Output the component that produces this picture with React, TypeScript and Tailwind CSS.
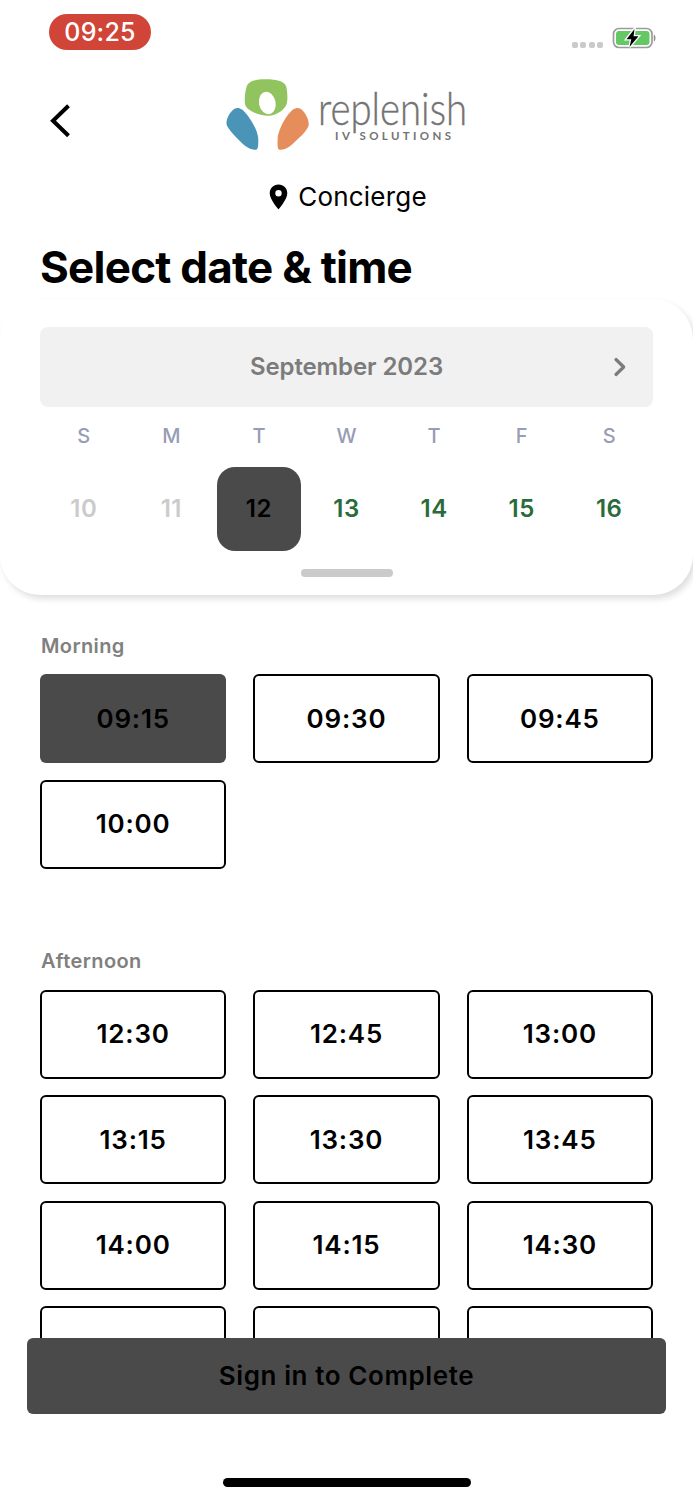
import clsx from 'clsx';

const days = [
  { label: 'S', date: 10, status: 'past' },
  { label: 'M', date: 11, status: 'past' },
  { label: 'T', date: 12, status: 'selected' },
  { label: 'W', date: 13, status: 'open' },
  { label: 'T', date: 14, status: 'open' },
  { label: 'F', date: 15, status: 'open' },
  { label: 'S', date: 16, status: 'open' },
];

const morning = ['09:15', '09:30', '09:45', '10:00'];
const afternoon = [
  '12:30', '12:45', '13:00',
  '13:15', '13:30', '13:45',
  '14:00', '14:15', '14:30',
  '', '', '',
];

function StatusBar() {
  return (
    <div className="flex h-16 shrink-0 items-start justify-between pl-[49px] pr-[35px] pt-[14px]">
      <div className="flex h-[36px] w-[102px] items-center justify-center rounded-full bg-[#d14538] pt-0.5 text-[25px] font-medium tracking-[0.2px] text-white">
        09:25
      </div>
      <div className="flex items-center gap-[9px] pt-3">
        <div className="flex gap-[2.5px] pt-3.5">
          {[0, 1, 2, 3].map((i) => (
            <span key={i} className="h-1.5 w-1.5 rounded-[2px] bg-[#cacaca]" />
          ))}
        </div>
        <svg width="46" height="24" viewBox="0 0 46 24" fill="none">
          <rect x="1.5" y="2.5" width="38.5" height="19" rx="5.5" stroke="#9b9b9b" strokeWidth="1.7" />
          <rect x="4" y="5" width="33.5" height="14" rx="3" fill="#64c864" />
          <path d="M41.8 8.5c2.2.8 2.2 6.2 0 7z" fill="#8c8c8c" />
          <path d="M22.5 3 14.5 13.2h4.8L17.500 21 26.500 10.3h-4.900z" fill="#000" stroke="#fff" strokeWidth="2.6" paintOrder="stroke" />
        </svg>
      </div>
    </div>
  );
}

function Logo() {
  return (
    <svg className="h-[80px] w-[260px] overflow-visible" viewBox="0 0 260 80">
      <path d="M26.5 13C28 8 33 5.3 45 5.2c13 0 19.5 2.4 21.2 7.3 1 3.5 1.8 12.5.6 17C65 36 56 41.5 48.5 41.8 37 41.5 27 36 25.3 31c-1.2-4-.3-13.500 1.2-18z" fill="#91c45f" />
      <ellipse cx="47.3" cy="29" rx="8.3" ry="11.3" transform="rotate(-12 47.3 29)" fill="#fff" />
      <path d="M15 34.5c2.3-1 4.8-.5 7 1C28 40 37.500 55 38.200 64c.3 5 0 10.500-1.500 11.500-1.600 1.100-8-.5-12-4C17.500 65 7 54.500 6.500 50c-.5-6 4.500-13.500 8.500-15.500z" fill="#4a94b8" />
      <path d="M80 34.5c-2.3-1-4.8-.5-7 1C67 40 58.500 55 57.700 64c-.3 5-.3 10.500 1.200 11.500 1.600 1.100 8-.5 12-4C78 65 88 56.500 88.700 51c.7-6-4.700-14.500-8.700-16.500z" fill="#e58e5c" />
      <text x="98" y="50.500" textLength="149" lengthAdjust="spacingAndGlyphs" fill="#737373" stroke="#737373" strokeWidth="0.4" className="font-['Lato',sans-serif] text-[46px] font-light">
        replenish
      </text>
      <g fill="#737373" className="font-['Lato',sans-serif] text-[11.5px] font-bold">
        <text x="115" y="65.700" textLength="15">IV</text>
        <text x="139.500" y="65.700" textLength="91.500">SOLUTIONS</text>
      </g>
    </svg>
  );
}

function Header() {
  return (
    <header className="shrink-0">
      <div className="grid h-[102px] grid-cols-[220px_260px_1fr] items-start pt-[10px]">
        <button aria-label="Back" className="ml-[48px] mt-[29px] w-6">
          <svg width="24" height="36" viewBox="0 0 24 36" fill="none" stroke="#000" strokeWidth="4">
            <path d="M20.500 2.800 5 17.700 20.500 32.700" />
          </svg>
        </button>
        <Logo />
      </div>
      <div className="flex h-[60px] items-center justify-center gap-[10px] pl-[3px]">
        <svg width="19" height="26" viewBox="0 0 19 26" className="mt-0.5">
          <path fillRule="evenodd" d="M9.500.5C4.500.5.700 4.300.700 9.200c0 6.300 8.800 16.100 8.800 16.100s8.800-9.800 8.800-16.100C18.300 4.300 14.500.500 9.500.500zm0 5.600a3.200 3.200 0 1 1 0 6.400 3.200 3.200 0 0 1 0-6.400z" />
        </svg>
        <span className="text-[26px] tracking-[0.2px]">Concierge</span>
      </div>
      <h1 className="pl-10 pt-[15px] text-[44px] font-bold leading-[52px] tracking-[-0.75px]">Select date &amp; time</h1>
    </header>
  );
}

function Calendar() {
  return (
    <section className="mt-[6px] flex h-[296px] shrink-0 flex-col rounded-[40px] bg-white px-10 pt-[28px] shadow-[3px_4px_6px_rgba(0,0,0,0.13)]">
      <div className="flex h-[80px] shrink-0 items-center rounded-lg bg-[#f1f1f1]">
        <span className="flex-1 pl-[66px] text-center text-[24px] font-semibold tracking-[-0.1px] text-[#7b7b7b]">September 2023</span>
        <button aria-label="Next month" className="flex w-[66px] justify-center">
          <svg width="14" height="22" viewBox="0 0 14 22" fill="none" stroke="#7b7b7b" strokeWidth="3.2" strokeLinecap="round" strokeLinejoin="round">
            <path d="M3 3.500 10.700 11 3 18.500" />
          </svg>
        </button>
      </div>
      <div className="grid grid-cols-7">
        {days.map((day) => (
          <div key={day.date} className="flex flex-col items-center">
            <span className="flex h-[60px] items-center pb-0.5 text-[20px] font-medium text-[#989cb5]">{day.label}</span>
            <span
              className={clsx(
                'flex h-[84px] w-[84px] items-center justify-center rounded-[18px] text-[24px] font-semibold tracking-[0.5px]',
                day.status === 'past' && 'text-[#cbcbcb]',
                day.status === 'selected' && 'bg-[#4a4a4a] text-black',
                day.status === 'open' && 'text-[#2b6b3b]'
              )}
            >
              {day.date}
            </span>
          </div>
        ))}
      </div>
      <div className="mx-auto mt-[18.4px] h-2 w-[92px] rounded-full bg-[#cacaca]" />
    </section>
  );
}

function TimeSlots({ title, slots, selected }: { title: string; slots: string[]; selected?: string }) {
  return (
    <section>
      <h2 className="pl-px text-[20px] font-semibold leading-[24px] tracking-[0.4px] text-[#808080]">{title}</h2>
      <div className="mt-[16.4px] grid grid-cols-3 gap-x-[27px] gap-y-[16.5px]">
        {slots.map((slot, i) => (
          <button
            key={i}
            className={clsx(
              'h-[89px] rounded-md pb-px text-[26px] font-semibold tracking-[0.8px] text-black',
              slot && slot === selected ? 'bg-[#4a4a4a]' : 'border-2 border-black bg-white'
            )}
          >
            {slot}
          </button>
        ))}
      </div>
    </section>
  );
}

export default function App() {
  return (
    <div className="flex h-[1500px] w-[693px] flex-col overflow-hidden bg-white font-['Inter',sans-serif] text-black">
      <StatusBar />
      <Header />
      <Calendar />
      <main className="flex min-h-0 flex-1 flex-col gap-[80.5px] overflow-hidden px-10 pt-[39px]">
        <TimeSlots title="Morning" slots={morning} selected="09:15" />
        <TimeSlots title="Afternoon" slots={afternoon} />
      </main>
      <footer className="flex h-[162px] shrink-0 flex-col items-center justify-between bg-white pb-[13.5px]">
        <button className="h-[76px] w-[639px] rounded-md bg-[#4a4a4a] pb-px text-[26px] font-semibold tracking-[0.6px]">
          Sign in to Complete
        </button>
        <div className="h-[8.5px] w-[248px] rounded-full bg-black" />
      </footer>
    </div>
  );
}
